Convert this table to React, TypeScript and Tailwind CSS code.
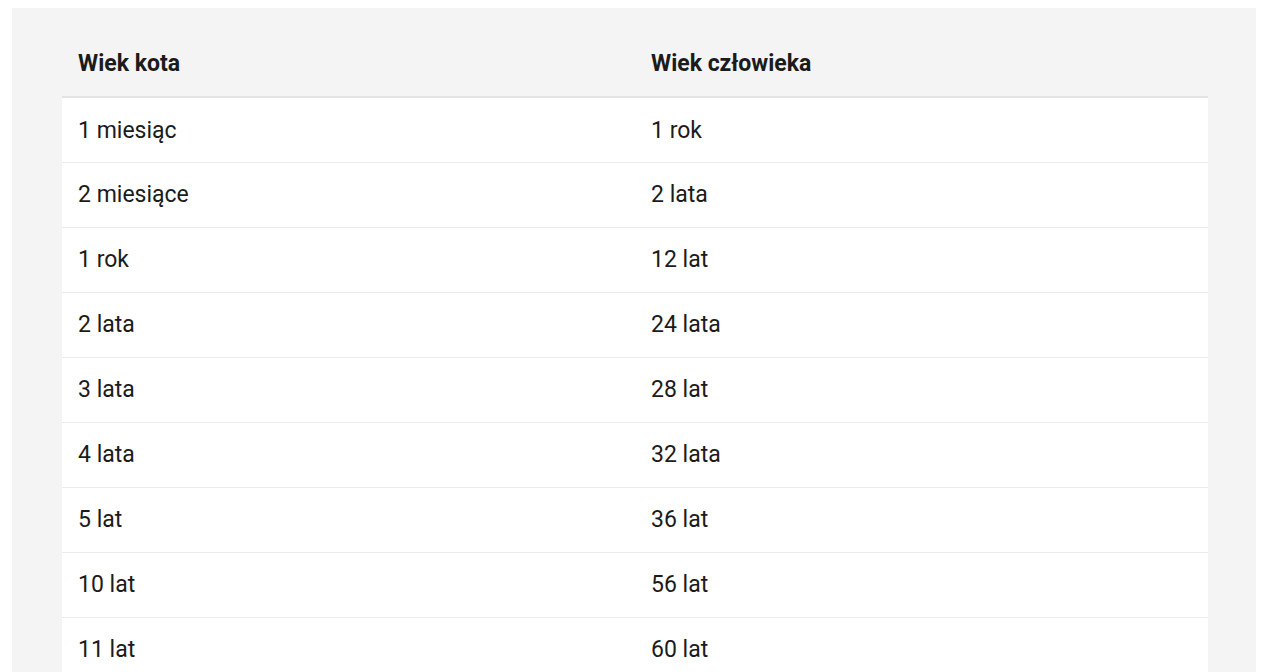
const rows = [
  ["1 miesiąc", "1 rok"],
  ["2 miesiące", "2 lata"],
  ["1 rok", "12 lat"],
  ["2 lata", "24 lata"],
  ["3 lata", "28 lat"],
  ["4 lata", "32 lata"],
  ["5 lat", "36 lat"],
  ["10 lat", "56 lat"],
  ["11 lat", "60 lat"],
  ["12 lat", "64 lata"],
];

export default function App() {
  return (
    <div className="min-h-screen bg-white pl-3 pr-6 pt-2 font-['Roboto',sans-serif] text-[#1b1b1b]">
      <div className="bg-[#f4f4f4] pl-[50px] pr-[48px] pt-5 pb-10">
        <table className="w-full table-fixed border-collapse text-left text-[23px]">
          <thead>
            <tr className="border-b-2 border-[#e3e3e3]">
              <th className="h-[69px] px-4 pt-1 font-bold">Wiek kota</th>
              <th className="h-[69px] px-4 pt-1 font-bold">Wiek człowieka</th>
            </tr>
          </thead>
          <tbody className="bg-white">
            {rows.map(([cat, human], i) => (
              <tr key={i} className="border-b border-[#ececec]">
                <td className="h-[65px] px-4 pt-[2px]">{cat}</td>
                <td className="h-[65px] px-4 pt-[2px]">{human}</td>
              </tr>
            ))}
          </tbody>
        </table>
      </div>
    </div>
  );
}
